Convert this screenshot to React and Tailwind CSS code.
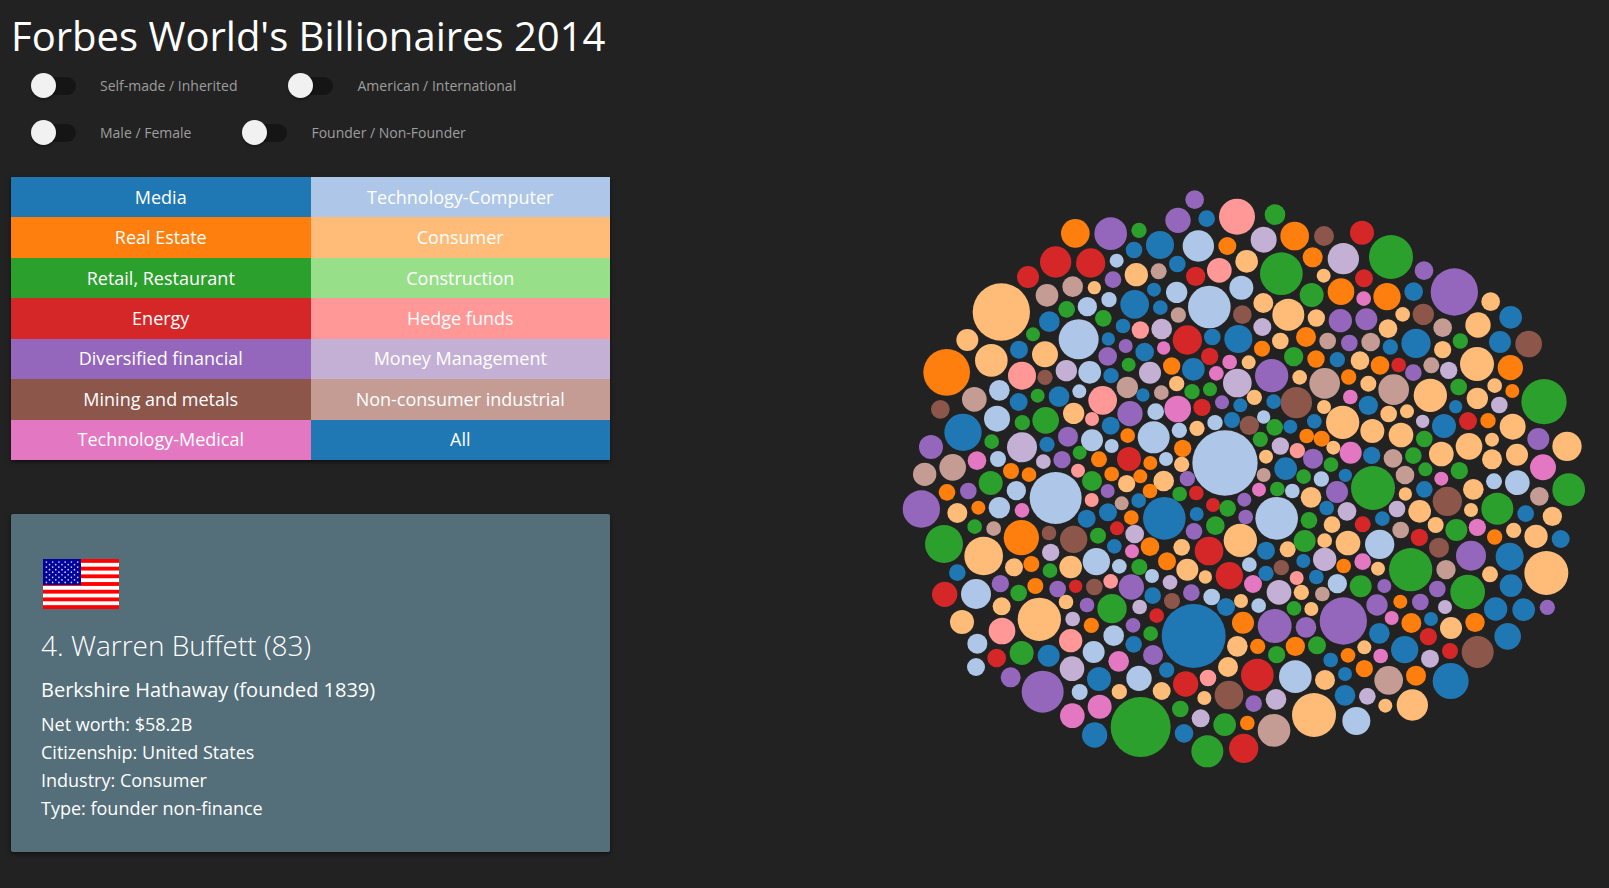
import { useState } from "react";

const COLORS = {
  b: "#1f77b4",
  l: "#aec7e8",
  o: "#ff7f0e",
  c: "#ffbb78",
  g: "#2ca02c",
  r: "#d62728",
  h: "#ff9896",
  p: "#9467bd",
  m: "#c5b0d5",
  n: "#8c564b",
  i: "#c49c94",
  t: "#e377c2",
};

const CATEGORIES = [
  { name: "Media", key: "b", bg: "bg-[#1f77b4]" },
  { name: "Technology-Computer", key: "l", bg: "bg-[#aec7e8]" },
  { name: "Real Estate", key: "o", bg: "bg-[#ff7f0e]" },
  { name: "Consumer", key: "c", bg: "bg-[#ffbb78]" },
  { name: "Retail, Restaurant", key: "g", bg: "bg-[#2ca02c]" },
  { name: "Construction", key: "k", bg: "bg-[#98df8a]" },
  { name: "Energy", key: "r", bg: "bg-[#d62728]" },
  { name: "Hedge funds", key: "h", bg: "bg-[#ff9896]" },
  { name: "Diversified financial", key: "p", bg: "bg-[#9467bd]" },
  { name: "Money Management", key: "m", bg: "bg-[#c5b0d5]" },
  { name: "Mining and metals", key: "n", bg: "bg-[#8c564b]" },
  { name: "Non-consumer industrial", key: "i", bg: "bg-[#c49c94]" },
  { name: "Technology-Medical", key: "t", bg: "bg-[#e377c2]" },
  { name: "All", key: "", bg: "bg-[#1f77b4]" },
];

// Each sector of the chart lists its bubbles as "industry x y radius".
const SECTORS = [
  {
    x: 0,
    y: 0,
    bubbles:
      "o 526 160 43,p 632 161 49,r 467 246 47,r 572 249 44,l 650 242 21,r 384 291 33,p 639 299 25,i 518 320 31,c 583 323 20,i 441 346 34,l 627 359 23,l 562 380 29,g 500 388 25,c 304 396 86,b 448 425 31,g 610 415 25,b 669 438 22,g 399 463 21,c 202 480 33,l 536 478 60,b 625 477 20,p 677 498 21,b 357 509 27,c 435 523 39,p 623 529 28,c 274 541 49,g 686 554 21,h 366 587 42,m 499 572 32,l 569 577 34,n 435 592 23,b 633 587 23,o 140 577 70",
  },
  {
    x: 690,
    y: 0,
    bubbles:
      "p 194 59 28,p 144 121 38,b 230 116 25,h 321 110 54,g 435 104 31,g 27 151 23,b 12 210 25,b 90 195 42,l 205 198 47,o 292 198 27,m 401 179 39,o 494 168 43,n 582 168 30,o 548 232 30,m 640 236 47,b 142 252 25,i 86 274 24,c 19 284 35,r 197 289 29,h 268 271 37,c 350 244 34,g 454 281 64,c 581 287 21,b 72 329 21,l 140 337 32,b 14 373 43,b 91 383 22,l 238 381 64,l 334 323 36,g 545 345 36,o 633 335 40,c 400 369 30,c 475 404 48,n 337 404 28,i 145 405 23,c 559 414 26,p 631 422 35,m 95 447 31,h 31 450 26,r 172 480 44,b 247 471 25,b 325 477 42,m 397 441 27,c 451 483 25,o 528 471 30,i 593 483 25,p 658 489 25,b 44 516 28,t 101 504 20,r 239 529 26,o 396 506 24,g 491 530 29,o 558 537 26,b 622 539 23,m 60 578 33,o 125 558 26,b 190 568 34,t 299 546 22,t 259 580 22,c 356 547 21,p 425 587 50,c 509 592 22,o 656 591 23",
  },
  {
    x: 1380,
    y: 0,
    bubbles:
      "r 6 158 36,g 93 231 66,p 192 272 28,p 283 336 71,r 12 295 27,b 161 335 28,t 11 356 22,o 81 350 41,c 128 403 22,n 190 403 32,c 392 365 28,b 452 412 34,p 19 418 33,c 84 446 28,i 248 443 28,c 354 435 38,b 168 490 44,b 91 501 23,i 32 486 28,c 248 509 26,g 301 483 23,b 420 486 33,n 506 492 40,c 0 542 28,o 60 556 28,r 116 555 22,i 214 556 24,p 160 578 25,m 266 571 26,c 351 552 51,o 451 563 38",
  },
  {
    x: 0,
    y: 600,
    bubbles:
      "i 223 58 37,l 298 31 31,b 356 66 27,g 413 47 21,b 477 50 31,l 538 34 21,i 682 22 32,h 608 61 43,n 121 88 28,l 291 116 39,g 367 128 23,g 437 121 40,c 521 100 32,h 576 117 21,b 632 137 27,b 189 157 56,p 93 201 36,g 275 185 22,m 366 202 45,b 441 193 23,p 504 170 30,l 576 181 33,o 683 167 22,l 635 198 21,g 539 218 21,r 687 237 36,t 231 242 28,l 294 237 24,m 430 245 22,p 486 239 26,o 597 238 24,i 158 262 40,i 74 283 35,o 333 273 24,o 387 284 22,h 534 272 21,g 576 303 30,o 635 282 22,c 680 311 26,g 272 309 36,o 141 337 25,p 205 333 25,l 349 332 29,p 623 333 21,h 575 360 21,l 467 354 78,p 64 387 56,c 172 399 30,o 235 383 21,l 298 383 32,t 366 391 22,i 665 370 21,b 624 397 27,b 560 416 27,r 651 445 21,g 224 440 22,i 281 446 22,o 364 473 53,n 447 459 22,n 521 478 41,g 594 467 24,b 643 499 22,g 132 492 57,c 251 528 58,m 452 517 26,c 342 562 27,o 394 552 24,g 450 572 22,c 512 561 34,l 589 545 41,l 658 559 22,b 172 578 25",
  },
  {
    x: 690,
    y: 600,
    bubbles:
      "b 39 45 20,i 94 38 22,c 140 11 23,g 186 35 23,g 240 28 21,m 322 9 43,p 276 67 21,c 373 52 23,b 331 76 21,b 431 65 22,n 499 68 47,i 584 10 46,c 582 81 21,t 661 51 22,p 0 101 38,l 77 95 25,t 143 87 40,r 216 82 26,l 255 128 23,b 306 120 24,c 201 145 23,n 358 136 29,l 401 111 20,g 434 142 25,b 481 140 21,b 553 124 22,c 638 127 50,l 71 172 48,l 148 151 23,g 391 178 23,m 451 198 26,o 530 168 22,o 575 176 24,c 610 203 21,o 158 205 26,h 502 212 23,p 549 236 30,t 662 218 33,l 108 237 21,o 61 249 21,c 155 253 23,l 285 249 98,c 408 230 21,b 467 266 34,g 603 254 22,i 401 285 21,g 521 290 22,l 574 297 23,b 646 286 20,o 31 289 21,c 101 303 31,p 172 296 23,r 199 339 22,g 149 342 22,o 60 333 22,b 26 362 22,t 387 329 21,g 442 327 22,l 487 333 22,c 543 352 31,p 621 336 33,p 343 359 21,r 249 375 21,g 293 385 25,p 347 411 22,b 103 415 64,b 200 402 21,l 440 415 64,b 590 384 22,m 651 394 28,g 537 421 25,c 606 434 25,o 4 413 22,p 192 454 25,g 256 437 28,c 331 481 50,m 14 462 28,g 524 483 33,c 584 482 22,c 654 489 37,o 60 500 28,c 155 502 25,r 237 513 43,b 408 512 27,c 473 508 24,t 6 514 21,o 111 544 27,g 28 561 24,b 520 543 21,m 584 538 35,o 641 558 22,c 172 569 33,l 358 554 22,n 454 563 23,c 226 591 20,r 298 587 41,b 408 580 23,h 500 594 21,l 66 588 21,b 559 591 22",
  },
  {
    x: 1380,
    y: 600,
    bubbles:
      "c 25 11 24,i 101 29 46,c 211 46 50,g 296 21 25,c 404 17 22,o 457 33 21,c 352 55 32,b 25 76 29,b 287 80 20,m 418 75 25,c 86 102 25,c 141 94 21,g 552 65 68,m 188 124 20,b 252 138 36,r 324 123 27,o 384 122 23,c 458 140 39,c 37 153 36,c 123 165 37,g 193 177 25,c 396 179 21,p 535 177 33,c 621 199 44,c 327 199 40,b 35 226 26,g 160 227 25,c 244 222 37,c 396 238 30,c 471 224 33,i 99 235 28,t 549 262 39,g 196 268 21,g 298 272 26,i 135 285 28,t 244 296 21,l 402 304 24,l 472 308 37,g 39 324 66,b 193 328 25,c 136 342 20,c 340 328 31,g 626 329 49,i 538 349 28,n 262 364 44,c 333 390 21,m 111 387 25,c 179 394 34,g 412 386 48,b 497 401 25,c 577 409 29,b 67 416 22,r 8 433 24,i 122 450 25,c 227 435 24,g 289 450 33,t 352 442 26,c 461 451 23,o 404 471 23,r 178 472 26,c 528 469 35,b 602 477 27,l 59 493 44,n 237 503 30,p 333 527 45,b 449 530 42,t 8 545 25,c 54 566 21,i 258 569 29,g 152 569 65,c 390 583 24,c 559 579 66",
  },
  {
    x: 0,
    y: 1200,
    bubbles:
      "r 134 43 38,l 228 42 45,p 301 11 26,g 356 39 25,o 406 18 24,p 473 27 25,r 527 19 20,n 583 21 25,h 632 4 22,c 305 79 27,c 418 118 65,c 498 66 22,p 561 75 22,g 636 86 44,c 186 126 36,m 518 117 22,o 574 136 23,h 306 153 40,h 512 182 35,l 641 167 31,l 232 191 30,l 581 216 33,g 365 219 36,b 446 227 33,r 290 234 28,t 656 244 31,l 228 261 27,m 516 266 37,p 332 292 30,b 597 297 36,p 428 335 63,l 539 336 24,c 658 335 23,t 599 380 36,t 517 407 37,b 584 465 38",
  },
  {
    x: 690,
    y: 1200,
    bubbles:
      "p 4 21 38,m 120 7 22,b 68 47 25,p 184 38 25,n 126 63 24,l 245 51 25,m 29 81 22,r 80 107 22,b 288 81 27,c 333 63 21,l 386 77 22,t 369 12 27,m 447 37 37,c 514 37 23,i 577 42 22,l 622 11 29,g 492 85 22,c 544 87 21,p 640 123 71,p 9 136 22,g 62 161 22,b 191 168 96,o 339 128 33,p 434 138 51,p 528 142 31,b 11 193 25,p 69 225 30,c 322 199 31,o 383 199 23,g 440 224 26,o 496 199 29,g 561 196 27,o 654 226 22,b 602 240 22,b 645 282 21,l 27 295 38,b 110 270 23,c 294 261 30,r 382 285 49,l 496 290 49,c 585 300 30,h 234 294 25,r 167 312 38,c 95 333 27,n 297 345 43,b 645 346 31,c 223 354 21,p 371 371 25,m 438 358 31,c 552 405 66,g 151 387 25,g 32 441 90,m 212 415 27,g 284 434 34,o 352 429 22,i 432 451 49,l 679 423 42,b 162 460 28,g 232 514 48,r 341 505 44",
  },
  {
    x: 1380,
    y: 1200,
    bubbles:
      "g 2 19 33,p 73 18 21,p 232 27 25,g 323 36 52,b 453 17 34,p 51 75 32,o 121 65 21,p 181 66 25,m 255 81 21,b 407 87 35,b 491 89 34,p 562 82 23,t 95 114 21,o 154 129 30,b 213 117 21,c 273 144 33,o 345 127 29,b 58 160 31,r 205 170 26,b 443 169 40,c 13 202 21,b 134 209 41,m 210 236 27,r 270 213 24,n 353 216 48,t 62 228 22,o 13 266 26,i 86 301 43,o 168 287 30,b 272 303 54,m 22 349 25,c 76 377 21,c 157 375 47",
  },
];

const BUBBLES = SECTORS.flatMap((sector) =>
  sector.bubbles.split(",").map((entry) => {
    const [industry, x, y, r] = entry.split(" ");
    return { industry, x: sector.x + Number(x), y: sector.y + Number(y), r: Number(r) };
  })
);

function Toggle({ label }) {
  return (
    <label className="flex h-[27px] cursor-pointer items-center gap-6 text-[14px] text-[#9e9e9e]">
      <input
        type="checkbox"
        className="h-[18px] w-10 shrink-0 cursor-pointer appearance-none rounded-full bg-[#151515] before:-mt-1 before:-ml-[5px] before:block before:size-[25px] before:rounded-full before:bg-[#f1f1f1] before:shadow-[0_2px_2px_rgba(0,0,0,0.3)] before:transition-transform checked:before:translate-x-6"
      />
      {label}
    </label>
  );
}

function Flag() {
  const stars = [];
  for (let row = 0; row < 9; row++) {
    const count = row % 2 === 0 ? 6 : 5;
    for (let col = 0; col < count; col++) {
      stars.push({ x: (row % 2 === 0 ? 3.4 : 6.5) + col * 6.25, y: 3 + row * 2.55 });
    }
  }
  return (
    <svg viewBox="0 0 76 50" className="ml-[2px] block h-[50px] w-[76px]" role="img" aria-label="United States">
      <rect width="76" height="50" fill="#fff" />
      {[0, 1, 2, 3, 4, 5, 6].map((n) => (
        <rect key={n} y={(n * 100) / 13} width="76" height={50 / 13} fill="#f00" />
      ))}
      <rect width="38" height="26" fill="#00009c" />
      {stars.map((s, n) => (
        <circle key={n} cx={s.x} cy={s.y} r="0.85" fill="#d5d5f2" />
      ))}
    </svg>
  );
}

export default function App() {
  const [selected, setSelected] = useState("");

  return (
    <div className="flex min-h-screen bg-[#222222] font-['Open_Sans','Noto_Sans',sans-serif] text-white">
      <aside className="w-[610px] shrink-0 pt-3 pb-9 pl-[11px]">
        <h1 className="text-[40px] leading-[48px] whitespace-nowrap">Forbes World's Billionaires 2014</h1>

        <div className="mt-3 flex flex-wrap gap-x-14 gap-y-5 pl-[25px]">
          <Toggle label="Self-made / Inherited" />
          <Toggle label="American / International" />
          <Toggle label="Male / Female" />
          <Toggle label="Founder / Non-Founder" />
        </div>

        <div className="mt-[31px] grid h-[283px] grid-cols-2 grid-rows-7 shadow-[0_2px_4px_rgba(0,0,0,0.5)]">
          {CATEGORIES.map((category) => (
            <button
              key={category.name}
              type="button"
              onClick={() => setSelected(category.key)}
              className={`${category.bg} cursor-pointer text-[18px]`}
            >
              {category.name}
            </button>
          ))}
        </div>

        <section className="mt-[54px] rounded-xs bg-[#546e7a] px-[30px] pt-[45px] pb-[30px] shadow-[0_2px_4px_rgba(0,0,0,0.5)]">
          <Flag />
          <h2 className="mt-4 text-[28px] leading-[40px] font-light">4. Warren Buffett (83)</h2>
          <h3 className="mt-[9px] text-[20px] leading-[32px] font-medium">Berkshire Hathaway (founded 1839)</h3>
          <ul className="mt-1 text-[18px] leading-[28px]">
            <li>Net worth: $58.2B</li>
            <li>Citizenship: United States</li>
            <li>Industry: Consumer</li>
            <li>Type: founder non-finance</li>
          </ul>
        </section>
      </aside>

      <main className="flex flex-1 items-start justify-end pt-[180px] pr-[19px]">
        <svg
          viewBox="0 0 2070 1800"
          className="h-auto w-[690px] max-w-full"
          role="img"
          aria-label="Billionaires by industry and net worth"
        >
          {BUBBLES.map((bubble, n) => (
            <circle
              key={n}
              cx={bubble.x}
              cy={bubble.y}
              r={bubble.r}
              fill={COLORS[bubble.industry]}
              opacity={selected === "" || selected === bubble.industry ? 1 : 0.1}
            />
          ))}
        </svg>
      </main>
    </div>
  );
}
